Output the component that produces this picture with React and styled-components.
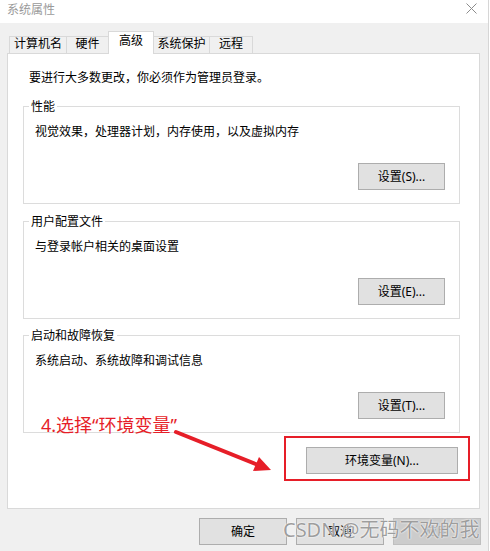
import React from "react";
import styled, { createGlobalStyle } from "styled-components";

const GlobalStyle = createGlobalStyle`
  html, body { margin: 0; padding: 0; background: #ffffff; }
  * { box-sizing: border-box; }
  body { font-family: "Noto Sans", "Noto Sans CJK SC", sans-serif; }
`;

const Window = styled.div`
  position: relative;
  width: 489px;
  height: 551px;
  border-right: 1px solid #d6d6d6;
  display: flex;
  flex-direction: column;
  font-family: "Noto Sans", "Noto Sans CJK SC", sans-serif;
  font-size: 12px;
  color: #000;
  overflow: hidden;
`;

const TitleBar = styled.div`
  height: 23px;
  background: #ffffff;
  display: flex;
  justify-content: space-between;
  align-items: flex-start;
  padding: 2px 11px 0 7px;
`;

const Title = styled.div`
  font-size: 12px;
  line-height: 16px;
  color: #9a9a9a;
`;

const CloseIcon = styled.svg`
  margin-top: 1px;
  width: 11px;
  height: 11px;
`;

const Body = styled.div`
  flex: 1;
  background: #f0f0f0;
  padding: 8px 8px 0 7px;
  display: flex;
  flex-direction: column;
`;

const TabStrip = styled.div`
  position: relative;
  z-index: 1;
  display: flex;
  align-items: flex-end;
  height: 23px;
  margin-left: 2px;
  margin-bottom: -1px;
`;

const Tab = styled.div`
  width: ${(p) => p.$w}px;
  margin-left: -1px;
  &:first-child { margin-left: 0; }
  text-align: center;
  border: 1px solid #d9d9d9;
  border-bottom: ${(p) => (p.$active ? "none" : "1px solid #d9d9d9")};
  background: ${(p) => (p.$active ? "#ffffff" : "#f0f0f0")};
  height: ${(p) => (p.$active ? 23 : 18)}px;
  line-height: ${(p) => (p.$active ? 18 : 13)}px;
  white-space: nowrap;
`;

const Panel = styled.div`
  height: 456px;
  background: #ffffff;
  border: 1px solid #d9d9d9;
  padding: 16px 19px 0 15px;
  display: flex;
  flex-direction: column;
`;

const Intro = styled.div`
  line-height: 16px;
  margin-left: 6px;
`;

const Group = styled.div`
  margin-top: ${(p) => p.$gap}px;
  height: 98px;
  border: 1px solid #dcdcdc;
  display: flex;
  flex-direction: column;
  padding-left: 11px;
`;

const Legend = styled.div`
  align-self: flex-start;
  margin-top: -8px;
  margin-left: -6px;
  padding: 0 2px;
  background: #ffffff;
  line-height: 16px;
`;

const Description = styled.div`
  margin-top: 9px;
  line-height: 16px;
`;

const Button = styled.button`
  font-family: "Noto Sans", "Noto Sans CJK SC", sans-serif;
  font-size: 12px;
  color: ${(p) => (p.disabled ? "#a3a3a3" : "#000")};
  width: ${(p) => p.$w || 88}px;
  height: 27px;
  padding: 0;
  background: ${(p) => (p.disabled ? "#cccccc" : "#e1e1e1")};
  border: 1px solid ${(p) => (p.disabled ? "#bfbfbf" : "#adadad")};
  border-radius: 0;
  line-height: 16px;
`;

const GroupButton = styled(Button)`
  margin-top: auto;
  align-self: flex-end;
  margin-right: 14px;
  margin-bottom: 13px;
`;

const EnvButton = styled(Button)`
  align-self: flex-end;
  margin-top: 14px;
  margin-right: 2px;
`;

const ButtonRow = styled.div`
  display: flex;
  justify-content: flex-end;
  gap: 9px;
  margin-top: 9px;
  margin-right: -1px;
`;

const AnnotationText = styled.div`
  position: absolute;
  left: 41px;
  top: 416px;
  font-size: 18px;
  line-height: 18px;
  color: #e61e28;
  white-space: nowrap;
`;

const ArrowSvg = styled.svg`
  position: absolute;
  left: 170px;
  top: 425px;
  width: 110px;
  height: 52px;
`;

const RedFrame = styled.div`
  position: absolute;
  left: 284px;
  top: 436px;
  width: 186px;
  height: 45px;
  border: 2px solid #e61e28;
  pointer-events: none;
`;

const Watermark = styled.div`
  position: absolute;
  left: 283px;
  top: 520px;
  font-size: 20px;
  line-height: 20px;
  color: rgba(120, 120, 120, 0.72);
  text-shadow: 0 0 1px #fff, 0 0 2px #fff;
  white-space: nowrap;
  pointer-events: none;
`;

const tabs = [
  { label: "计算机名", w: 58 },
  { label: "硬件", w: 43 },
  { label: "高级", w: 46, active: true },
  { label: "系统保护", w: 57 },
  { label: "远程", w: 44 },
];

const groups = [
  { title: "性能", desc: "视觉效果，处理器计划，内存使用，以及虚拟内存", btn: "设置(S)...", gap: 20 },
  { title: "用户配置文件", desc: "与登录帐户相关的桌面设置", btn: "设置(E)...", gap: 17 },
  { title: "启动和故障恢复", desc: "系统启动、系统故障和调试信息", btn: "设置(T)...", gap: 16 },
];

export default function App() {
  return (
    <>
      <GlobalStyle />
      <Window>
        <TitleBar>
          <Title>系统属性</Title>
          <CloseIcon viewBox="0 0 11 11">
            <path d="M0.5 0.5 L10.5 10.5 M10.5 0.5 L0.5 10.5" stroke="#8c8c8c" strokeWidth="1" fill="none" />
          </CloseIcon>
        </TitleBar>
        <Body>
          <TabStrip>
            {tabs.map((t) => (
              <Tab key={t.label} $w={t.w} $active={t.active}>
                {t.label}
              </Tab>
            ))}
          </TabStrip>
          <Panel>
            <Intro>要进行大多数更改，你必须作为管理员登录。</Intro>
            {groups.map((g) => (
              <Group key={g.title} $gap={g.gap}>
                <Legend>{g.title}</Legend>
                <Description>{g.desc}</Description>
                <GroupButton $w={87}>{g.btn}</GroupButton>
              </Group>
            ))}
            <EnvButton $w={152}>环境变量(N)...</EnvButton>
          </Panel>
          <ButtonRow>
            <Button>确定</Button>
            <Button>取消</Button>
            <Button disabled>应用</Button>
          </ButtonRow>
        </Body>
        <AnnotationText>4.选择“环境变量”</AnnotationText>
        <ArrowSvg viewBox="0 0 110 52">
          <line x1="6" y1="7" x2="88" y2="40" stroke="#e61e28" strokeWidth="4" strokeLinecap="round" />
          <polygon points="101,45 89,32 83,46" fill="#e61e28" />
        </ArrowSvg>
        <RedFrame />
        <Watermark>CSDN @无码不欢的我</Watermark>
      </Window>
    </>
  );
}
